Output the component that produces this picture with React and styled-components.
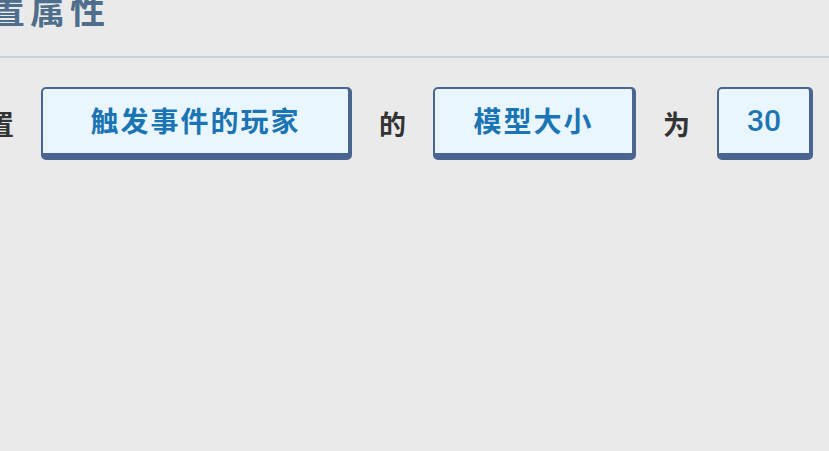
import React from "react";
import styled, { createGlobalStyle } from "styled-components";

const GlobalStyle = createGlobalStyle`
  html, body {
    margin: 0;
    padding: 0;
    background: #eaeaea;
    overflow: hidden;
  }
  body {
    font-family: "Noto Sans CJK SC", "Noto Sans", sans-serif;
  }
`;

const Page = styled.div`
  width: 829px;
  height: 451px;
  background: #eaeaea;
  overflow: hidden;
`;

const Header = styled.div`
  height: 56px;
  border-bottom: 2px solid #c9d1db;
  display: flex;
  align-items: flex-end;
`;

const Title = styled.h1`
  margin: 0 0 30px -50px;
  font-size: 35px;
  line-height: 35px;
  font-weight: 700;
  letter-spacing: 5px;
  color: #4f6e8b;
`;

const Row = styled.div`
  display: flex;
  align-items: center;
  gap: 27px;
  margin: 29px 0 0 -40px;
`;

const Word = styled.span`
  font-size: 27px;
  font-weight: 700;
  color: #333333;
  line-height: 1;
`;

const Slot = styled.div`
  box-sizing: border-box;
  width: ${(p) => p.$w}px;
  height: 73px;
  display: flex;
  align-items: center;
  justify-content: center;
  background: #eaf6fd;
  border: 2px solid #4a6590;
  border-right-width: 4px;
  border-bottom-width: 7px;
  border-radius: 5px;
  color: #1b74b3;
  font-family: ${(p) => (p.$num ? '"Roboto", "Noto Sans", sans-serif' : 'inherit')};
  font-size: ${(p) => (p.$num ? 30 : 28)}px;
  font-weight: ${(p) => (p.$num ? 500 : 700)};
  letter-spacing: ${(p) => (p.$num ? 0 : 2)}px;
  padding-bottom: 2px;
`;

export default function App() {
  return (
    <Page>
      <GlobalStyle />
      <Header>
        <Title>设置属性</Title>
      </Header>
      <Row>
        <Word>设置</Word>
        <Slot $w={311}>触发事件的玩家</Slot>
        <Word>的</Word>
        <Slot $w={203}>模型大小</Slot>
        <Word>为</Word>
        <Slot $w={96} $num>30</Slot>
      </Row>
    </Page>
  );
}
